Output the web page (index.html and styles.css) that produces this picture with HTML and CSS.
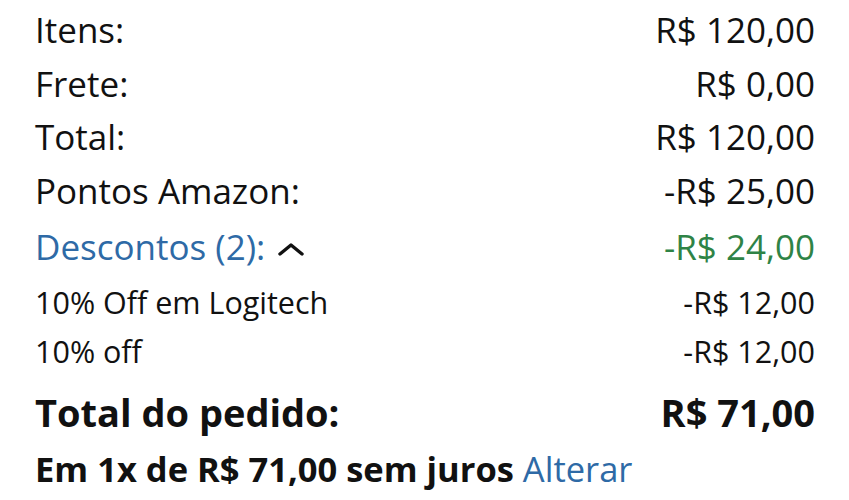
FILE: index.html
```html
<!DOCTYPE html>
<html lang="pt-BR">
<head>
  <meta charset="UTF-8" />
  <meta name="viewport" content="width=device-width, initial-scale=1" />
  <title>Resumo do pedido</title>
  <link rel="stylesheet" href="styles.css">
</head>
<body>
  <section class="summary">
    <div class="row">
      <span>Itens:</span>
      <span>R$ 120,00</span>
    </div>
    <div class="row">
      <span>Frete:</span>
      <span>R$ 0,00</span>
    </div>
    <div class="row">
      <span>Total:</span>
      <span>R$ 120,00</span>
    </div>
    <div class="row">
      <span>Pontos Amazon:</span>
      <span>-R$ 25,00</span>
    </div>
    <div class="row discounts">
      <span class="toggle">Descontos (2):<svg class="caret" width="28" height="14" viewBox="0 0 28 14">
          <path d="M3 12 L14 3 L25 12" fill="none" stroke="#111" stroke-width="3.4" stroke-linecap="round" stroke-linejoin="round"/>
        </svg></span>
      <span class="green">-R$ 24,00</span>
    </div>
    <div class="row small first">
      <span>10% Off em Logitech</span>
      <span>-R$ 12,00</span>
    </div>
    <div class="row small">
      <span>10% off</span>
      <span>-R$ 12,00</span>
    </div>
    <div class="row grand">
      <span>Total do pedido:</span>
      <span>R$ 71,00</span>
    </div>
    <p class="installments">Em 1x de R$ 71,00 sem juros <a href="#">Alterar</a></p>
  </section>
</body>
</html>
```

FILE: styles.css
```css
body {
  margin: 0;
  font-family: 'Open Sans', sans-serif;
  background-color: #fff;
  color: #111;
}
.summary {
  padding: 3px 34px 0 35px;
}
.row {
  display: flex;
  justify-content: space-between;
  align-items: baseline;
  font-size: 35px;
  line-height: 53.5px;
}
.discounts {
  margin-top: 3px;
}
.discounts .toggle {
  color: #2e6aa6;
}
.caret {
  margin-left: 12px;
  vertical-align: 4px;
}
.green {
  color: #2f8346;
}
.row.small {
  font-size: 30.5px;
  line-height: 49px;
}
.row.small.first {
  margin-top: 4px;
}
.row.grand {
  font-size: 38px;
  font-weight: bold;
  line-height: 60px;
  margin-top: 6px;
}
.installments {
  margin: 0;
  font-size: 34.5px;
  font-weight: bold;
  line-height: 54px;
}
.installments a {
  color: #2e6aa6;
  font-weight: normal;
  text-decoration: none;
}
```
